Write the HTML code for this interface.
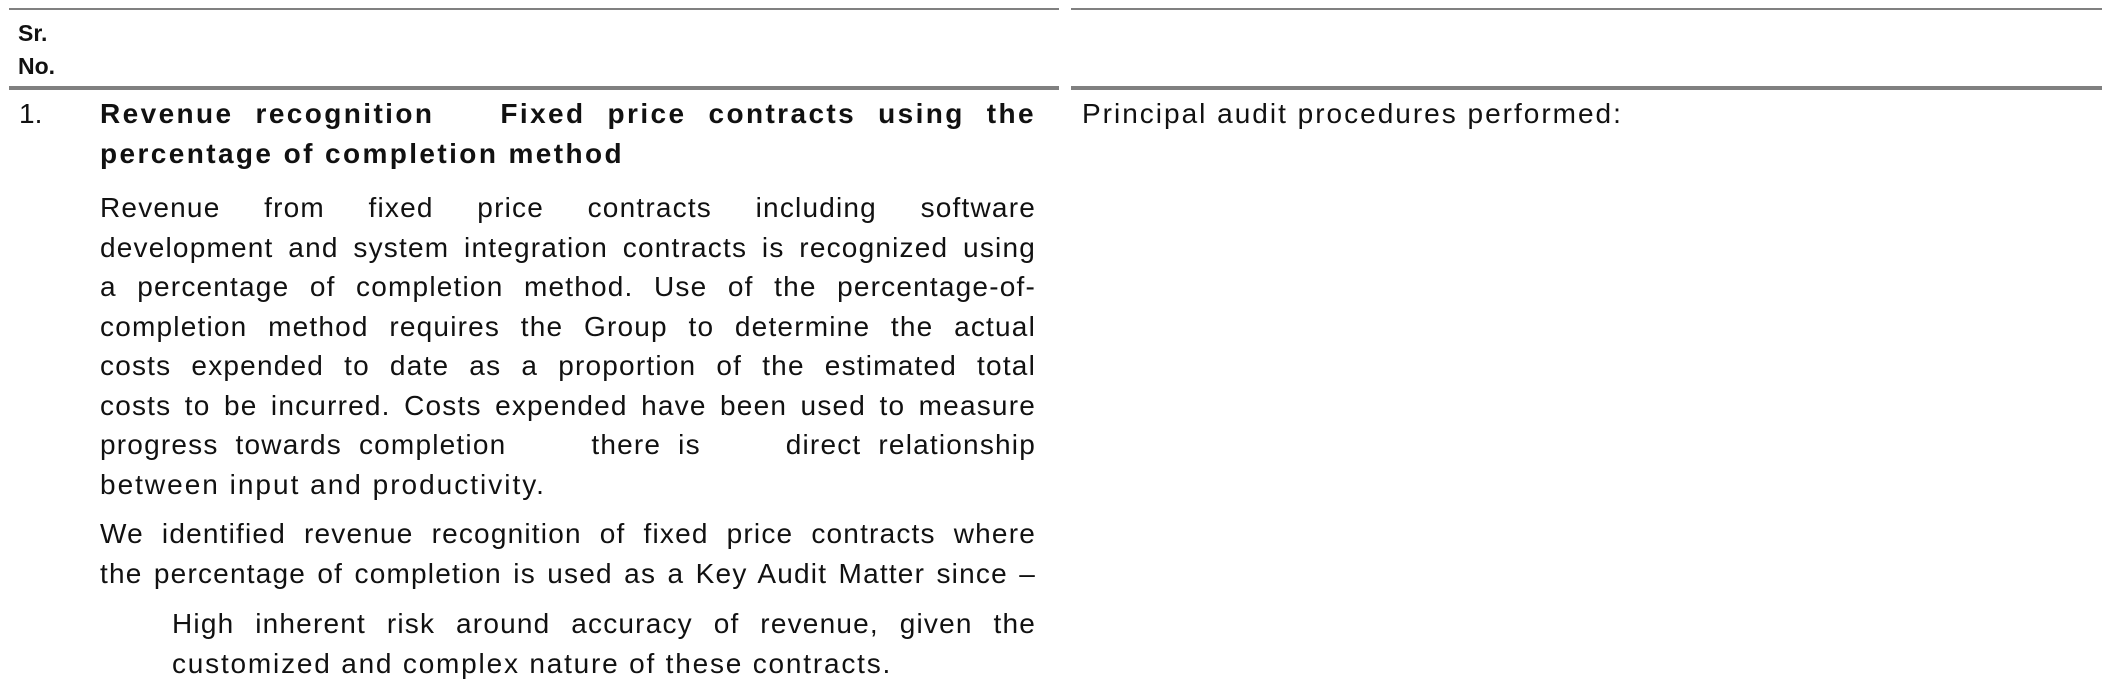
<!DOCTYPE html>
<html><head><meta charset="utf-8"><style>
html,body{margin:0;padding:0;background:#fff;width:2112px;height:697px;overflow:hidden}
body{position:relative;font-family:"Liberation Sans",sans-serif;color:#111}
.l{position:absolute;background:#808080}
.t{position:absolute;font-size:28px;line-height:39.5px;white-space:nowrap;letter-spacing:1.2px}
.t div{text-align:justify;text-align-last:justify;white-space:nowrap}
.t div.e{text-align-last:left}
</style></head><body>
<div class="l" style="left:9px;top:8px;width:1050px;height:2px"></div>
<div class="l" style="left:1071px;top:8px;width:1031px;height:2px"></div>
<div class="l" style="left:9px;top:86px;width:1050px;height:4px"></div>
<div class="l" style="left:1071px;top:86px;width:1031px;height:4px"></div>
<div style="position:absolute;left:18px;top:17px;font-size:23px;line-height:33px;font-weight:bold">Sr.<br>No.</div>
<div class="t" style="left:19px;top:94px;letter-spacing:0">1.</div>
<div class="t" style="left:100px;top:94px;width:936px;font-weight:bold;letter-spacing:2.4px">
<div>Revenue recognition &nbsp; Fixed price contracts using the</div>
<div class="e">percentage of completion method</div></div>
<div class="t" style="left:100px;top:188px;width:936px">
<div>Revenue from fixed price contracts including software</div>
<div>development and system integration contracts is recognized using</div>
<div>a percentage of completion method. Use of the percentage-of-</div>
<div>completion method requires the Group to determine the actual</div>
<div>costs expended to date as a proportion of the estimated total</div>
<div>costs to be incurred. Costs expended have been used to measure</div>
<div>progress towards completion &nbsp;&nbsp;&nbsp; there is &nbsp;&nbsp;&nbsp; direct relationship</div>
<div class="e" style="letter-spacing:2px">between input and productivity.</div></div>
<div class="t" style="left:100px;top:514px;width:936px">
<div>We identified revenue recognition of fixed price contracts where</div>
<div>the percentage of completion is used as a Key Audit Matter since –</div></div>
<div class="t" style="left:172px;top:604px;width:864px">
<div>High inherent risk around accuracy of revenue, given the</div>
<div class="e" style="letter-spacing:1.8px">customized and complex nature of these contracts.</div></div>
<div class="t" style="left:1082px;top:94px;letter-spacing:2px">Principal audit procedures performed:</div>
</body></html>
